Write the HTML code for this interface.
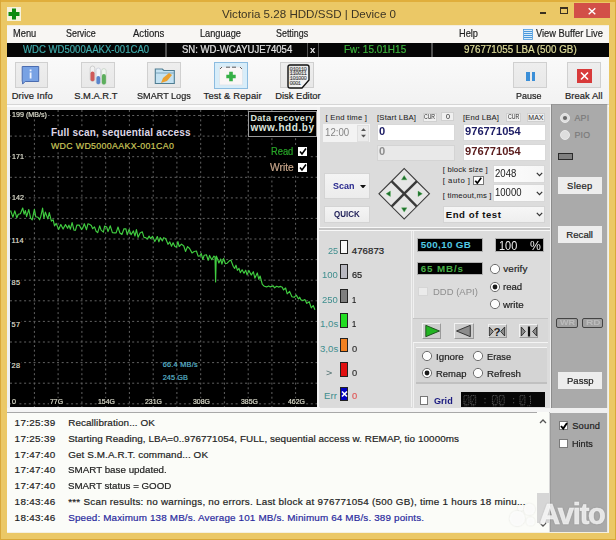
<!DOCTYPE html><html><head><meta charset="utf-8"><style>
html,body{margin:0;padding:0;width:616px;height:540px;overflow:hidden;background:#ebc866;}
body{position:relative;font-family:"Liberation Sans", sans-serif;}
div,span,svg{position:absolute;box-sizing:border-box;}
.t{white-space:nowrap;transform-origin:0 0;font-family:"Liberation Sans", sans-serif;}
</style></head><body>
<div style="left:0px;top:0px;width:616px;height:2px;background:#e0ae3c;"></div>
<div style="left:0px;top:0px;width:1px;height:540px;background:#d9a83a;"></div>
<div style="left:615px;top:0px;width:1px;height:540px;background:#d9a83a;"></div>
<div style="left:0px;top:539px;width:616px;height:1px;background:#d9a83a;"></div>
<div style="left:7px;top:25px;width:602px;height:1px;background:#f4eedc;"></div>
<svg style="left:7px;top:7px" width="14" height="14" viewBox="0 0 14 14"><rect x="0" y="0" width="14" height="14" fill="#f6f2dc"/><path d="M5 1.5h4v3.5h3.5v4H9v3.5H5V9H1.5V5H5z" fill="#108a10"/></svg>
<div style="left:540px;top:12px;width:6px;height:2px;background:#3a3020;"></div>
<div style="left:560px;top:7px;width:8px;height:7px;border:1.5px solid #3a3020;border-top-width:2.5px;"></div>
<div style="left:574px;top:3px;width:36px;height:15px;background:#d24f48;"></div>
<svg style="left:586px;top:5px" width="12" height="11" viewBox="0 0 12 11"><path d="M2.7 3.2L9.3 9.3M9.3 3.2L2.7 9.3" stroke="#fff" stroke-width="1.4"/></svg>
<div style="left:7px;top:26px;width:602px;height:507px;background:#f0f0f0;"></div>
<div style="left:7px;top:26px;width:602px;height:17px;background:#f8f6f3;"></div>
<svg style="left:523px;top:29px" width="10" height="11" viewBox="0 0 10 11"><rect x="0.5" y="0.5" width="9" height="10" fill="#d8ecfa" stroke="#4a98dc" stroke-width="0.8"/><path d="M1 2.5h8M1 4.5h8M1 6.5h8M1 8.5h8" stroke="#4a98dc" stroke-width="1"/></svg>
<div style="left:7px;top:43px;width:602px;height:14px;background:#060606;"></div>
<div style="left:165.0px;top:43px;width:1.5px;height:14px;background:#505050;"></div>
<div style="left:306.8px;top:43px;width:1.5px;height:14px;background:#505050;"></div>
<div style="left:317.8px;top:43px;width:1.5px;height:14px;background:#505050;"></div>
<div style="left:431.0px;top:43px;width:1.5px;height:14px;background:#505050;"></div>
<div style="left:7px;top:57px;width:602px;height:48px;background:linear-gradient(#fafafa,#f2f2f2);"></div>
<div style="left:7px;top:104px;width:602px;height:1px;background:#d6d6d6;"></div>
<div style="left:7px;top:105px;width:602px;height:2px;background:#fbfbfb;"></div>
<div style="left:14.5px;top:62.4px;width:33.3px;height:26.1px;background:linear-gradient(#eeeeee,#e8e8e8);border:1px solid #d0d0d0;"></div>
<div style="left:80.9px;top:62.4px;width:33.89999999999999px;height:26.1px;background:linear-gradient(#eeeeee,#e8e8e8);border:1px solid #d0d0d0;"></div>
<div style="left:147.2px;top:62.4px;width:33.60000000000002px;height:26.1px;background:linear-gradient(#eeeeee,#e8e8e8);border:1px solid #d0d0d0;"></div>
<div style="left:214.2px;top:62.3px;width:33.60000000000002px;height:26.299999999999997px;background:#d8edf9;border:1px solid #8cbce0;"></div>
<div style="left:280.2px;top:62.4px;width:33.400000000000034px;height:26.1px;background:linear-gradient(#eeeeee,#e8e8e8);border:1px solid #d0d0d0;"></div>
<div style="left:513.2px;top:62.4px;width:33.5px;height:26.1px;background:linear-gradient(#eeeeee,#e8e8e8);border:1px solid #d0d0d0;"></div>
<div style="left:566.9px;top:62.4px;width:33.89999999999998px;height:26.1px;background:linear-gradient(#eeeeee,#e8e8e8);border:1px solid #d0d0d0;"></div>
<svg style="left:21px;top:65px" width="20" height="21" viewBox="0 0 20 21"><path d="M1.2 1.5h16.5v15H4.2l-2.6 2.6V16.5H1.2z" fill="#78a2e4" stroke="#4a6cb0" stroke-width="1"/><rect x="8.7" y="4.5" width="1.8" height="1.8" fill="#eef4ff"/><rect x="8.7" y="7.5" width="1.8" height="6" fill="#eef4ff"/></svg>
<svg style="left:88px;top:64px" width="20" height="22" viewBox="0 0 20 22"><rect x="2.2" y="2" width="4.6" height="15.5" rx="2.3" fill="#f2f2f2" stroke="#b8b8b8" stroke-width="0.6"/><rect x="2.5" y="7.5" width="4" height="9.8" rx="2" fill="#cf5a5a"/><rect x="8.1" y="4" width="4.4" height="16.4" rx="2.2" fill="#f4f6fa" stroke="#c0c4d0" stroke-width="0.6"/><rect x="8.4" y="12" width="3.8" height="8.2" rx="1.9" fill="#5a86cc"/><rect x="13.6" y="4.6" width="4.6" height="16" rx="2.3" fill="#f0f6f0" stroke="#b8c8b8" stroke-width="0.6"/><rect x="13.9" y="10" width="4" height="10.4" rx="2" fill="#5cae5c"/></svg>
<svg style="left:154px;top:67px" width="22" height="18" viewBox="0 0 22 18"><path d="M1.3 2h7l1.5 1.5h10.5v13H1.3z" fill="#c4e2f2" stroke="#4f7d92" stroke-width="1.1"/><path d="M1.8 6h18" stroke="#6a98b0" stroke-width="0.8"/><path d="M7 16l2-5 6-5 3 2-5 6z" fill="#eaa030"/></svg>
<svg style="left:218px;top:65px" width="26" height="22" viewBox="0 0 26 22"><rect x="1.5" y="2" width="23" height="18" fill="#faf6f6" stroke="#dde4ea" stroke-width="0.8"/><path d="M2 4l2-2M24 4l-2-2M8 2.2h4M14 2.2h4" stroke="#333" stroke-width="0.8"/><path d="M11.2 6.8h3.6v2.9h2.9v3.6h-2.9v2.9h-3.6v-2.9H8.3V9.7h2.9z" fill="#36b046"/></svg>
<svg style="left:287px;top:63.5px" width="24" height="25" viewBox="0 0 24 25"><defs><linearGradient id="dg" x1="0" y1="0" x2="1" y2="1"><stop offset="0" stop-color="#dcdcdc"/><stop offset="1" stop-color="#fcfcfc"/></linearGradient></defs><path d="M3 1h17q2 0 2 2v13l-7 8H3q-2 0-2-2V3q0-2 2-2z" fill="url(#dg)" stroke="#111" stroke-width="1.4"/>
<g font-family="Liberation Mono" font-size="5.8" fill="#2a2a2a"><text x="2.6" y="6.8" textLength="17.5">010110</text><text x="2.6" y="11.4" textLength="17.5">110011</text><text x="2.6" y="16.3" textLength="17.5">101000</text><text x="2.6" y="21.2" textLength="11.5">0001</text></g></svg>
<div style="left:526.4px;top:72px;width:3.2000000000000455px;height:8.5px;background:#3b8fd8;"></div>
<div style="left:532.2px;top:72px;width:3.199999999999932px;height:8.5px;background:#3b8fd8;"></div>
<svg style="left:577px;top:69px" width="15" height="14" viewBox="0 0 15 14"><rect width="15" height="14" fill="#d83a3a"/><path d="M4 3.5l7 7M11 3.5l-7 7" stroke="#fff" stroke-width="1.6"/></svg>
<div style="left:10px;top:110px;width:307px;height:297.3px;background:#000;"></div>
<svg style="left:0px;top:0px" width="616" height="540">
<line x1="34.4" y1="110" x2="34.4" y2="407" stroke="#626262" stroke-width="1" stroke-dasharray="2 2.7"/>
<line x1="58.1" y1="110" x2="58.1" y2="407" stroke="#626262" stroke-width="1" stroke-dasharray="2 2.7"/>
<line x1="81.9" y1="110" x2="81.9" y2="407" stroke="#626262" stroke-width="1" stroke-dasharray="2 2.7"/>
<line x1="105.7" y1="110" x2="105.7" y2="407" stroke="#626262" stroke-width="1" stroke-dasharray="2 2.7"/>
<line x1="129.4" y1="110" x2="129.4" y2="407" stroke="#626262" stroke-width="1" stroke-dasharray="2 2.7"/>
<line x1="153.2" y1="110" x2="153.2" y2="407" stroke="#626262" stroke-width="1" stroke-dasharray="2 2.7"/>
<line x1="176.9" y1="110" x2="176.9" y2="407" stroke="#626262" stroke-width="1" stroke-dasharray="2 2.7"/>
<line x1="200.7" y1="110" x2="200.7" y2="407" stroke="#626262" stroke-width="1" stroke-dasharray="2 2.7"/>
<line x1="224.4" y1="110" x2="224.4" y2="407" stroke="#626262" stroke-width="1" stroke-dasharray="2 2.7"/>
<line x1="248.2" y1="110" x2="248.2" y2="407" stroke="#626262" stroke-width="1" stroke-dasharray="2 2.7"/>
<line x1="271.9" y1="110" x2="271.9" y2="407" stroke="#626262" stroke-width="1" stroke-dasharray="2 2.7"/>
<line x1="295.6" y1="110" x2="295.6" y2="407" stroke="#626262" stroke-width="1" stroke-dasharray="2 2.7"/>
<line x1="10" y1="115.5" x2="317" y2="115.5" stroke="#626262" stroke-width="1" stroke-dasharray="2 2.7"/>
<line x1="10" y1="136.1" x2="317" y2="136.1" stroke="#626262" stroke-width="1" stroke-dasharray="2 2.7"/>
<line x1="10" y1="156.7" x2="317" y2="156.7" stroke="#626262" stroke-width="1" stroke-dasharray="2 2.7"/>
<line x1="10" y1="177.3" x2="317" y2="177.3" stroke="#626262" stroke-width="1" stroke-dasharray="2 2.7"/>
<line x1="10" y1="197.9" x2="317" y2="197.9" stroke="#626262" stroke-width="1" stroke-dasharray="2 2.7"/>
<line x1="10" y1="218.4" x2="317" y2="218.4" stroke="#626262" stroke-width="1" stroke-dasharray="2 2.7"/>
<line x1="10" y1="239.0" x2="317" y2="239.0" stroke="#626262" stroke-width="1" stroke-dasharray="2 2.7"/>
<line x1="10" y1="259.6" x2="317" y2="259.6" stroke="#626262" stroke-width="1" stroke-dasharray="2 2.7"/>
<line x1="10" y1="280.2" x2="317" y2="280.2" stroke="#626262" stroke-width="1" stroke-dasharray="2 2.7"/>
<line x1="10" y1="300.8" x2="317" y2="300.8" stroke="#626262" stroke-width="1" stroke-dasharray="2 2.7"/>
<line x1="10" y1="321.4" x2="317" y2="321.4" stroke="#626262" stroke-width="1" stroke-dasharray="2 2.7"/>
<line x1="10" y1="342.0" x2="317" y2="342.0" stroke="#626262" stroke-width="1" stroke-dasharray="2 2.7"/>
<line x1="10" y1="362.6" x2="317" y2="362.6" stroke="#626262" stroke-width="1" stroke-dasharray="2 2.7"/>
<line x1="10" y1="383.2" x2="317" y2="383.2" stroke="#626262" stroke-width="1" stroke-dasharray="2 2.7"/>
<line x1="10" y1="403.8" x2="317" y2="403.8" stroke="#626262" stroke-width="1" stroke-dasharray="2 2.7"/>
<polyline points="10.6,210.5 12.9,217.1 14.8,210.8 16.8,217.8 18.3,214.3 20.4,213.7 22.7,208.0 24.1,214.2 25.4,210.5 26.6,216.6 28.8,209.5 30.6,218.1 32.2,219.9 34.4,209.3 35.8,216.8 38.0,217.3 39.6,219.8 40.8,216.4 42.6,208.1 43.9,218.3 45.4,212.1 47.8,218.9 49.3,212.6 51.4,221.1 53.2,219.8 54.5,225.9 56.2,223.4 58.6,229.5 60.8,224.5 63.1,229.1 65.5,224.6 67.6,228.3 68.9,225.1 70.4,229.2 72.1,222.6 74.0,230.1 75.4,230.3 76.9,225.0 79.2,225.1 81.5,229.6 82.8,227.9 84.3,223.7 86.5,229.7 87.9,223.8 89.4,224.3 91.3,225.5 92.7,228.7 94.5,226.9 96.1,231.2 97.7,232.6 99.7,225.9 101.1,230.1 103.4,232.1 104.6,226.1 106.7,227.0 108.0,231.6 110.3,225.8 112.4,232.7 114.4,232.9 116.1,232.9 118.0,227.0 119.9,233.0 121.9,234.5 124.0,228.7 125.9,228.9 127.2,234.7 129.1,229.4 131.1,234.7 133.4,230.9 135.0,236.0 136.4,229.6 138.1,237.3 140.1,233.0 142.3,231.8 144.0,237.4 145.3,237.6 147.5,238.9 149.1,236.1 150.6,238.6 152.5,236.3 154.8,241.6 156.0,239.3 157.3,236.5 158.9,241.8 160.2,237.6 162.4,240.9 163.7,237.7 165.6,238.5 168.0,244.3 169.8,241.9 171.5,246.2 173.1,242.7 174.9,246.5 176.5,247.1 177.9,241.6 179.2,246.5 181.5,244.1 183.8,246.0 185.5,251.4 187.6,246.6 189.6,248.5 192.0,252.9 194.2,251.5 196.4,251.0 198.1,256.1 199.9,256.0 201.2,253.4 202.8,259.5 204.2,255.2 206.4,254.8 208.2,260.3 209.6,255.4 211.7,259.7 213.9,256.1 215.0,257.0 215.6,282.0 216.3,256.0 217.0,257.5 218.9,263.0 220.7,259.1 221.9,264.1 223.6,258.5 225.4,263.7 227.2,263.2 229.6,260.6 230.9,260.3 233.2,266.3 234.6,268.4 236.0,265.2 237.4,270.3 239.0,268.3 240.3,272.7 242.1,269.7 244.0,273.2 245.7,270.2 247.1,274.9 248.9,270.5 251.2,275.1 253.3,271.7 254.9,278.1 257.3,272.9 258.8,279.3 260.1,276.0 262.3,284.4 264.3,286.2 266.6,286.9 268.7,285.9 270.0,286.9 271.8,286.4 273.2,285.8 274.6,287.8 276.7,286.3 278.4,287.1 280.6,286.4 282.3,287.3 283.5,289.9 285.6,288.0 287.2,293.8 289.6,291.4 291.9,296.8 294.1,297.3 296.3,295.1 298.5,299.0 299.7,297.2 301.0,299.9 302.9,300.5 304.9,299.5 306.8,303.4 309.2,301.7 311.3,307.9 313.2,305.5 314.9,309.8" fill="none" stroke="#40cc40" stroke-width="1.15" stroke-linejoin="round"/>
</svg>
<div style="left:248px;top:111px;width:69px;height:25.5px;background:#000;border:1px solid #9a9a9a;"></div>
<div style="left:49px;top:127px;width:144px;height:24px;background:#000;"></div>
<div style="left:268px;top:145px;width:42px;height:30px;background:#000;"></div>
<div style="left:297.8px;top:147.2px;width:9.599999999999966px;height:9.0px;background:#fff;"></div>
<svg style="left:298px;top:147.2px" width="10" height="9" viewBox="0 0 10 9"><path d="M2 4.5l2 2.5 4-5.5" stroke="#000" stroke-width="1.6" fill="none"/></svg>
<div style="left:297.8px;top:163px;width:9.599999999999966px;height:9px;background:#fff;"></div>
<svg style="left:298px;top:163px" width="10" height="9" viewBox="0 0 10 9"><path d="M2 4.5l2 2.5 4-5.5" stroke="#000" stroke-width="1.6" fill="none"/></svg>
<div style="left:10.5px;top:109.8px;width:37.099999999999994px;height:9.0px;background:#000;"></div>
<div style="left:10.5px;top:152.2px;width:14.2px;height:9.0px;background:#000;"></div>
<div style="left:10.5px;top:193.2px;width:14.2px;height:9.0px;background:#000;"></div>
<div style="left:10.5px;top:235.8px;width:14.2px;height:9.0px;background:#000;"></div>
<div style="left:10.5px;top:277.7px;width:10.7px;height:9.0px;background:#000;"></div>
<div style="left:10.5px;top:319.7px;width:10.7px;height:9.0px;background:#000;"></div>
<div style="left:10.5px;top:361.0px;width:10.7px;height:9.0px;background:#000;"></div>
<div style="left:10.5px;top:397.6px;width:6.199999999999999px;height:9.0px;background:#000;"></div>
<div style="left:49.3px;top:398px;width:15.0px;height:8px;background:#000;"></div>
<div style="left:97.0px;top:398px;width:19.0px;height:8px;background:#000;"></div>
<div style="left:143.9px;top:398px;width:19.0px;height:8px;background:#000;"></div>
<div style="left:191.8px;top:398px;width:19.0px;height:8px;background:#000;"></div>
<div style="left:239.5px;top:398px;width:19.0px;height:8px;background:#000;"></div>
<div style="left:287.0px;top:398px;width:19.0px;height:8px;background:#000;"></div>
<div style="left:317px;top:107px;width:2.5px;height:304px;background:#f2f2f2;"></div>
<div style="left:319.5px;top:107px;width:230.5px;height:304px;background:#dcdcdc;"></div>
<div style="left:323.3px;top:123.8px;width:47.099999999999966px;height:18.39999999999999px;background:#f3f3f3;"></div>
<div style="left:357px;top:124.5px;width:12px;height:17.0px;background:#ececec;border:1px solid #e0e0e0;"></div>
<svg style="left:359px;top:126px" width="9" height="14" viewBox="0 0 9 14"><path d="M2 5l2.5-2.8 2.5 2.8z" fill="#555"/><path d="M2 8.8l2.5 2.8 2.5-2.8z" fill="#555"/></svg>
<div style="left:422.6px;top:112.8px;width:14.299999999999955px;height:9.200000000000003px;background:#f0f0f0;border:1px solid #d0d0d0;"></div>
<div style="left:440.7px;top:112.4px;width:13.699999999999989px;height:8.599999999999994px;background:#f0f0f0;border:1px solid #d0d0d0;"></div>
<div style="left:506px;top:112.8px;width:14.600000000000023px;height:9.200000000000003px;background:#f0f0f0;border:1px solid #d0d0d0;"></div>
<div style="left:526.5px;top:112.8px;width:18.5px;height:9.200000000000003px;background:#f0f0f0;border:1px solid #d0d0d0;"></div>
<div style="left:377px;top:124px;width:78.30000000000001px;height:16.5px;background:#fff;border:1px solid #d8d8d8;"></div>
<div style="left:377px;top:144.5px;width:78.30000000000001px;height:16.0px;background:#e9e9e9;border:1px solid #d4d4d4;"></div>
<div style="left:463px;top:123.5px;width:83px;height:17.0px;background:#fff;border:1px solid #d8d8d8;"></div>
<div style="left:463px;top:144px;width:83px;height:16.5px;background:#fff;border:1px solid #d8d8d8;"></div>
<div style="left:324.4px;top:172.7px;width:46.0px;height:26.30000000000001px;background:linear-gradient(#f4f4f4,#ececec);border:1px solid #d4d4d4;"></div>
<svg style="left:359.5px;top:184.5px" width="6" height="3.5" viewBox="0 0 6 3.5"><path d="M0 0h6L3 3.5z" fill="#111"/></svg>
<div style="left:324.4px;top:206.4px;width:46.0px;height:17.099999999999994px;background:linear-gradient(#f4f4f4,#ececec);border:1px solid #d4d4d4;"></div>
<svg style="left:377px;top:167px" width="55" height="54" viewBox="0 0 55 54">
<g transform="translate(27.2,26.8) rotate(45)">
<rect x="-18.4" y="-18.4" width="36.8" height="36.8" fill="#3a3a3a"/>
<rect x="-17.3" y="-17.3" width="16.1" height="16.1" fill="#e6e6e6"/>
<rect x="1.2" y="-17.3" width="16.1" height="16.1" fill="#e6e6e6"/>
<rect x="-17.3" y="1.2" width="16.1" height="16.1" fill="#e6e6e6"/>
<rect x="1.2" y="1.2" width="16.1" height="16.1" fill="#e6e6e6"/>
</g>
<path d="M24.5 12.8l2.7-4.3 2.7 4.3z" fill="#1e6e2e" stroke="#50b050" stroke-width="0.4"/>
<path d="M24.5 40.8l2.7 4.3 2.7-4.3z" fill="#1e6e2e" stroke="#50b050" stroke-width="0.4"/>
<path d="M13.4 24.1l-4.3 2.7 4.3 2.7z" fill="#1e6e2e" stroke="#50b050" stroke-width="0.4"/>
<path d="M41 24.1l4.3 2.7-4.3 2.7z" fill="#1e6e2e" stroke="#50b050" stroke-width="0.4"/>
</svg>
<div style="left:473.3px;top:176.2px;width:10.300000000000011px;height:9.200000000000017px;background:#fff;border:1px solid #777;"></div>
<svg style="left:473.3px;top:176.2px" width="10.3" height="9.2" viewBox="0 0 10 9"><path d="M2.2 4.6l2 2.4 3.8-5.2" stroke="#000" stroke-width="1.7" fill="none"/></svg>
<div style="left:492.7px;top:165.4px;width:52.69999999999999px;height:17.5px;background:linear-gradient(90deg,#fdfdfd,#f6f6f6);border:1px solid #d8d8d8;"></div>
<svg style="left:536.4px;top:171.8px" width="7" height="5" viewBox="0 0 7 5"><path d="M0.8 0.8l2.7 2.9 2.7-2.9" stroke="#333" stroke-width="1.2" fill="none"/></svg>
<div style="left:492.7px;top:184.1px;width:52.69999999999999px;height:18.099999999999994px;background:linear-gradient(90deg,#fdfdfd,#f6f6f6);border:1px solid #d8d8d8;"></div>
<svg style="left:536.4px;top:190.7px" width="7" height="5" viewBox="0 0 7 5"><path d="M0.8 0.8l2.7 2.9 2.7-2.9" stroke="#333" stroke-width="1.2" fill="none"/></svg>
<div style="left:442.8px;top:205.5px;width:102.59999999999997px;height:17.80000000000001px;background:linear-gradient(#f6f6f6,#eeeeee);border:1px solid #d4d4d4;"></div>
<svg style="left:536.4px;top:212.3px" width="7" height="5" viewBox="0 0 7 5"><path d="M0.8 0.8l2.7 2.9 2.7-2.9" stroke="#333" stroke-width="1.2" fill="none"/></svg>
<div style="left:319px;top:226.5px;width:231px;height:1.0px;background:#f8f8f8;"></div>
<div style="left:319px;top:227.5px;width:231px;height:2.5px;background:#c4c4c4;"></div>
<div style="left:319px;top:230px;width:231px;height:1px;background:#f8f8f8;"></div>
<div style="left:318.5px;top:231px;width:93.5px;height:176px;background:#dbdbdb;border-right:1px solid #f0f0f0;"></div>
<div style="left:340.2px;top:239.9px;width:8.199999999999989px;height:14.5px;background:#f8f8f8;border:1.3px solid #222;"></div>
<div style="left:340.2px;top:264.34000000000003px;width:8.199999999999989px;height:14.5px;background:#b8b8c0;border:1.3px solid #222;"></div>
<div style="left:340.2px;top:288.78000000000003px;width:8.199999999999989px;height:14.5px;background:#7e7e7e;border:1.3px solid #222;"></div>
<div style="left:340.2px;top:313.22px;width:8.199999999999989px;height:14.5px;background:#22dd22;border:1.3px solid #222;"></div>
<div style="left:340.2px;top:337.66px;width:8.199999999999989px;height:14.5px;background:#f08020;border:1.3px solid #222;"></div>
<div style="left:340.2px;top:362.1px;width:8.199999999999989px;height:14.5px;background:#e01010;border:1.3px solid #222;"></div>
<div style="left:340.2px;top:386.54px;width:8.199999999999989px;height:14.5px;background:#0000c0;border:1.3px solid #222;"></div>
<svg style="left:341px;top:388.5px" width="7" height="10" viewBox="0 0 7 10"><path d="M1 2.5l5 5M6 2.5l-5 5" stroke="#fff" stroke-width="1.6"/></svg>
<div style="left:413px;top:231px;width:137px;height:180px;background:#dcdcdc;border-left:1px solid #f0f0f0;"></div>
<div style="left:417.1px;top:238.3px;width:66.0px;height:14.199999999999989px;background:#000;border:1px solid #b0b0b0;"></div>
<div style="left:494.7px;top:238.1px;width:49.099999999999966px;height:14.099999999999994px;background:#000;border:1px solid #b0b0b0;"></div>
<div style="left:417.1px;top:261.8px;width:66.0px;height:13.599999999999966px;background:#000;border:1px solid #b0b0b0;"></div>
<svg style="left:488.5px;top:262.7px" width="12" height="12" viewBox="0 0 12 12"><circle cx="6" cy="6" r="4.6" fill="#fdfdfd" stroke="#6e6e6e" stroke-width="1"/></svg>
<svg style="left:488.5px;top:281.0px" width="12" height="12" viewBox="0 0 12 12"><circle cx="6" cy="6" r="4.6" fill="#fdfdfd" stroke="#6e6e6e" stroke-width="1"/><circle cx="6" cy="6" r="2.4" fill="#1a1a1a"/></svg>
<svg style="left:488.5px;top:298.3px" width="12" height="12" viewBox="0 0 12 12"><circle cx="6" cy="6" r="4.6" fill="#fdfdfd" stroke="#6e6e6e" stroke-width="1"/></svg>
<div style="left:418.3px;top:286.7px;width:9.699999999999989px;height:9.100000000000023px;background:#ebebeb;border:1px solid #d6d6d6;"></div>
<div style="left:413px;top:318px;width:135px;height:25px;background:#d8d8d8;border-top:1px solid #c4c4c4;border-bottom:1px solid #f4f4f4;"></div>
<div style="left:422.2px;top:323px;width:18.80000000000001px;height:15.600000000000023px;background:#cdcdcd;border:1px solid #f2f2f2;border-right-color:#9a9a9a;border-bottom-color:#9a9a9a;"></div>
<svg style="left:424px;top:324px" width="17" height="14" viewBox="0 0 17 14"><path d="M1.8 1.3L15.5 7 1.8 12.7z" fill="#22b422" stroke="#1a4a1a" stroke-width="0.9"/></svg>
<div style="left:454px;top:323px;width:19.5px;height:15.600000000000023px;background:#cdcdcd;border:1px solid #f2f2f2;border-right-color:#9a9a9a;border-bottom-color:#9a9a9a;"></div>
<svg style="left:455px;top:324px" width="17" height="14" viewBox="0 0 17 14"><path d="M15.3 1.3L1.5 7l13.8 5.7z" fill="#8c8c8c" stroke="#2a2a2a" stroke-width="0.9"/></svg>
<div style="left:487.6px;top:323.9px;width:19.0px;height:14.600000000000023px;background:#cdcdcd;border:1px solid #f2f2f2;border-right-color:#9a9a9a;border-bottom-color:#9a9a9a;"></div>
<svg style="left:488px;top:325px" width="18" height="13" viewBox="0 0 18 13"><path d="M1.3 2l4 4.5-4 4.5z" fill="#8c8c8c" stroke="#2a2a2a" stroke-width="0.9"/><path d="M16.7 2l-4 4.5 4 4.5z" fill="#8c8c8c" stroke="#2a2a2a" stroke-width="0.9"/><text x="5.6" y="11.2" font-family="Liberation Sans" font-weight="bold" font-size="11.5" fill="#1a1a1a">?</text></svg>
<div style="left:519.4px;top:323.9px;width:19.0px;height:14.600000000000023px;background:#cdcdcd;border:1px solid #f2f2f2;border-right-color:#9a9a9a;border-bottom-color:#9a9a9a;"></div>
<svg style="left:520px;top:325px" width="18" height="13" viewBox="0 0 18 13"><path d="M1.3 2l4 4.5-4 4.5z" fill="#8c8c8c" stroke="#2a2a2a" stroke-width="0.9"/><path d="M16.7 2l-4 4.5 4 4.5z" fill="#8c8c8c" stroke="#2a2a2a" stroke-width="0.9"/><rect x="7.9" y="1.5" width="2.2" height="10" fill="#111"/></svg>
<div style="left:415.7px;top:346.5px;width:131.50000000000006px;height:37.5px;background:#d4d4d4;border-top:1px solid #f4f4f4;border-bottom:2px solid #c0c0c0;"></div>
<svg style="left:420.6px;top:350.1px" width="12" height="12" viewBox="0 0 12 12"><circle cx="6" cy="6" r="4.6" fill="#fdfdfd" stroke="#6e6e6e" stroke-width="1"/></svg>
<svg style="left:471.5px;top:350.1px" width="12" height="12" viewBox="0 0 12 12"><circle cx="6" cy="6" r="4.6" fill="#fdfdfd" stroke="#6e6e6e" stroke-width="1"/></svg>
<svg style="left:420.6px;top:367.2px" width="12" height="12" viewBox="0 0 12 12"><circle cx="6" cy="6" r="4.6" fill="#fdfdfd" stroke="#6e6e6e" stroke-width="1"/><circle cx="6" cy="6" r="2.4" fill="#1a1a1a"/></svg>
<svg style="left:471.5px;top:367.2px" width="12" height="12" viewBox="0 0 12 12"><circle cx="6" cy="6" r="4.6" fill="#fdfdfd" stroke="#6e6e6e" stroke-width="1"/></svg>
<div style="left:419.5px;top:395.5px;width:8.899999999999977px;height:9.300000000000011px;background:#fff;border:1px solid #777;"></div>
<div style="left:461.3px;top:391.7px;width:83.99999999999994px;height:15.699999999999989px;background:#060606;"></div>
<svg style="left:0px;top:0px" width="616" height="540"><g fill="none" stroke="#5a5a5a" stroke-width="0.9" stroke-dasharray="1.2 0.6"><path d="M464.4 395.6h4.2l0.3 0.4v8.1l-0.3 0.3h-4.2l-0.4-0.3v-8.1z"/><path d="M464.7 403.5l3.5-7" stroke-width="0.6"/><path d="M464.4 405.8h4" stroke-width="0.7"/><path d="M471.2 395.6h4.2l0.3 0.4v8.1l-0.3 0.3h-4.2l-0.4-0.3v-8.1z"/><path d="M471.5 403.5l3.5-7" stroke-width="0.6"/><path d="M471.2 405.8h4" stroke-width="0.7"/><path d="M485.0 398.3v1M485.0 402.3v1" stroke-width="1.1" stroke-dasharray="none"/><path d="M492.8 395.6h4.2l0.3 0.4v8.1l-0.3 0.3h-4.2l-0.4-0.3v-8.1z"/><path d="M493.1 403.5l3.5-7" stroke-width="0.6"/><path d="M492.8 405.8h4" stroke-width="0.7"/><path d="M499.7 395.6h4.2l0.3 0.4v8.1l-0.3 0.3h-4.2l-0.4-0.3v-8.1z"/><path d="M500.0 403.5l3.5-7" stroke-width="0.6"/><path d="M499.7 405.8h4" stroke-width="0.7"/><path d="M513.6 398.3v1M513.6 402.3v1" stroke-width="1.1" stroke-dasharray="none"/><path d="M520.4 395.6h4.2l0.3 0.4v8.1l-0.3 0.3h-4.2l-0.4-0.3v-8.1z"/><path d="M520.7 403.5l3.5-7" stroke-width="0.6"/><path d="M520.4 405.8h4" stroke-width="0.7"/><path d="M530.5 395.6v8.7M529.2 396.8l1.3-1.2" /><path d="M527.2 405.8h4" stroke-width="0.7"/></g></svg>
<div style="left:551px;top:104px;width:57px;height:304px;background:#aaaaaa;border-left:1.5px solid #8c8c8c;border-top:1px solid #999;border-right:1px solid #e8e8e0;"></div>
<svg style="left:559.0px;top:111.7px" width="12" height="12" viewBox="0 0 12 12"><circle cx="6" cy="6" r="4.5" fill="#dedede" stroke="#ececec" stroke-width="0.9"/><circle cx="6" cy="6" r="2.1" fill="#6a6a6a"/></svg>
<svg style="left:559.0px;top:129.2px" width="12" height="12" viewBox="0 0 12 12"><circle cx="6" cy="6" r="4.5" fill="#dedede" stroke="#ececec" stroke-width="0.9"/></svg>
<div style="left:558.1px;top:152.8px;width:15.0px;height:7.399999999999977px;background:#808080;border:1.2px solid #2a2a2a;"></div>
<div style="left:558.2px;top:177.1px;width:43.69999999999993px;height:16.599999999999994px;background:#ededed;"></div>
<div style="left:558.2px;top:226.3px;width:43.69999999999993px;height:17.0px;background:#ededed;"></div>
<div style="left:556.3px;top:317.6px;width:21.300000000000068px;height:10.0px;background:#a0a0a0;border:1.5px solid #444;border-radius:2px;"></div>
<div style="left:582px;top:317.6px;width:21.100000000000023px;height:10.0px;background:#a0a0a0;border:1.5px solid #444;border-radius:2px;"></div>
<div style="left:557.8px;top:372px;width:44.40000000000009px;height:17.30000000000001px;background:#ededed;"></div>
<div style="left:7px;top:407.5px;width:543px;height:4.5px;background:#f4f4f4;"></div>
<div style="left:7px;top:412px;width:543px;height:121px;background:#fbfcf8;border-top:1px solid #a8a8a8;border-right:1px solid #d8d8d8;"></div>
<div style="left:537.3px;top:412px;width:12.0px;height:120px;background:#fbfcf8;"></div>
<div style="left:537.3px;top:492.8px;width:11.700000000000045px;height:29.80000000000001px;background:#d6d6d6;"></div>
<svg style="left:539px;top:418px" width="8" height="6" viewBox="0 0 8 6"><path d="M1 5l3-3 3 3" stroke="#555" stroke-width="1.3" fill="none"/></svg>
<svg style="left:539px;top:522px" width="8" height="6" viewBox="0 0 8 6"><path d="M1 1l3 3 3-3" stroke="#555" stroke-width="1.3" fill="none"/></svg>
<div style="left:550px;top:412.6px;width:58px;height:120.10000000000002px;background:#aaaaaa;border-left:1px solid #9c9c9c;border-right:1px solid #e8e8e0;"></div>
<div style="left:558.5px;top:420.8px;width:9.5px;height:9.699999999999989px;background:#fff;border:1px solid #7a7a7a;"></div>
<svg style="left:558.5px;top:420.8px" width="10" height="10" viewBox="0 0 10 10"><path d="M2 5l2.2 2.6 3.8-5.6" stroke="#000" stroke-width="1.9" fill="none"/></svg>
<div style="left:558.5px;top:438.9px;width:9.5px;height:9.600000000000023px;background:#fff;border:1px solid #7a7a7a;"></div>
<div style="left:7px;top:532px;width:602px;height:1px;background:#f4f0e0;"></div>
<svg style="left:500px;top:495px" width="116" height="42" viewBox="500 495 116 42">
<defs><filter id="sh" x="-20%" y="-20%" width="140%" height="140%"><feGaussianBlur in="SourceAlpha" stdDeviation="0.8"/><feOffset dx="0" dy="0.4"/><feComponentTransfer><feFuncA type="linear" slope="0.18"/></feComponentTransfer><feMerge><feMergeNode/><feMergeNode in="SourceGraphic"/></feMerge></filter></defs>
<g filter="url(#sh)" fill="#ffffff" fill-opacity="0.72">
<circle cx="517.3" cy="518.4" r="7.5"/>
<circle cx="529.4" cy="509.3" r="5.5"/>
<circle cx="530.6" cy="521.4" r="3.9"/>
<circle cx="520.6" cy="507.7" r="2.6"/>
<text x="539.2" y="523.6" font-family="Liberation Sans" font-weight="bold" font-size="29" letter-spacing="-1.2" stroke="#fff" stroke-opacity="0.6" stroke-width="0.6">Avito</text>
</g></svg>
<span class="t" id="t0" style="left:222px;top:7.60px;font-size:11.6px;line-height:11.6px;color:#3c3424;font-weight:normal;font-family:'Liberation Sans', sans-serif;transform:scaleX(0.9988);letter-spacing:0.000px;">Victoria 5.28 HDD/SSD | Device 0</span>
<span class="t" id="t1" style="left:12.5px;top:27.50px;font-size:10.6px;line-height:10.6px;color:#1e1e1e;font-weight:normal;font-family:'Liberation Sans', sans-serif;transform:scaleX(0.8755);letter-spacing:0.000px;-webkit-text-stroke:0.2px currentColor;">Menu</span>
<span class="t" id="t2" style="left:66px;top:27.50px;font-size:10.6px;line-height:10.6px;color:#1e1e1e;font-weight:normal;font-family:'Liberation Sans', sans-serif;transform:scaleX(0.8407);letter-spacing:0.000px;-webkit-text-stroke:0.2px currentColor;">Service</span>
<span class="t" id="t3" style="left:133px;top:27.50px;font-size:10.6px;line-height:10.6px;color:#1e1e1e;font-weight:normal;font-family:'Liberation Sans', sans-serif;transform:scaleX(0.9007);letter-spacing:0.000px;-webkit-text-stroke:0.2px currentColor;">Actions</span>
<span class="t" id="t4" style="left:200px;top:27.50px;font-size:10.6px;line-height:10.6px;color:#1e1e1e;font-weight:normal;font-family:'Liberation Sans', sans-serif;transform:scaleX(0.8697);letter-spacing:0.000px;-webkit-text-stroke:0.2px currentColor;">Language</span>
<span class="t" id="t5" style="left:276px;top:27.50px;font-size:10.6px;line-height:10.6px;color:#1e1e1e;font-weight:normal;font-family:'Liberation Sans', sans-serif;transform:scaleX(0.8411);letter-spacing:0.000px;-webkit-text-stroke:0.2px currentColor;">Settings</span>
<span class="t" id="t6" style="left:459px;top:27.50px;font-size:10.6px;line-height:10.6px;color:#1e1e1e;font-weight:normal;font-family:'Liberation Sans', sans-serif;transform:scaleX(0.8717);letter-spacing:0.000px;-webkit-text-stroke:0.2px currentColor;">Help</span>
<span class="t" id="t7" style="left:536.2px;top:27.50px;font-size:10.6px;line-height:10.6px;color:#1e1e1e;font-weight:normal;font-family:'Liberation Sans', sans-serif;transform:scaleX(0.8783);letter-spacing:0.000px;-webkit-text-stroke:0.2px currentColor;">View Buffer Live</span>
<span class="t" id="t8" style="left:23.2px;top:44.50px;font-size:10.2px;line-height:10.2px;color:#3eaaaa;font-weight:normal;font-family:'Liberation Sans', sans-serif;transform:scaleX(0.9397);letter-spacing:0.000px;-webkit-text-stroke:0.2px currentColor;">WDC WD5000AAKX-001CA0</span>
<span class="t" id="t9" style="left:181.5px;top:44.50px;font-size:10.2px;line-height:10.2px;color:#e0e0e0;font-weight:normal;font-family:'Liberation Sans', sans-serif;transform:scaleX(0.9374);letter-spacing:0.000px;-webkit-text-stroke:0.2px currentColor;">SN: WD-WCAYUJE74054</span>
<span class="t" id="t10" style="left:309.8px;top:45.05px;font-size:9.5px;line-height:9.5px;color:#e8e8e8;font-weight:bold;font-family:'Liberation Sans', sans-serif;transform:scaleX(1.0006);letter-spacing:0.000px;">x</span>
<span class="t" id="t11" style="left:343.9px;top:44.50px;font-size:10.2px;line-height:10.2px;color:#3cb43c;font-weight:normal;font-family:'Liberation Sans', sans-serif;transform:scaleX(0.9805);letter-spacing:0.000px;-webkit-text-stroke:0.2px currentColor;">Fw: 15.01H15</span>
<span class="t" id="t12" style="left:464px;top:44.50px;font-size:10.2px;line-height:10.2px;color:#dedc98;font-weight:normal;font-family:'Liberation Sans', sans-serif;transform:scaleX(0.9658);letter-spacing:0.000px;-webkit-text-stroke:0.2px currentColor;">976771055 LBA (500 GB)</span>
<span class="t" id="t13" style="left:11.7px;top:90.60px;font-size:9.4px;line-height:9.4px;color:#1e1e1e;font-weight:normal;font-family:'Liberation Sans', sans-serif;transform:scaleX(1.0000);letter-spacing:0.108px;-webkit-text-stroke:0.2px currentColor;">Drive Info</span>
<span class="t" id="t14" style="left:74.2px;top:90.60px;font-size:9.4px;line-height:9.4px;color:#1e1e1e;font-weight:normal;font-family:'Liberation Sans', sans-serif;transform:scaleX(1.0000);letter-spacing:0.008px;-webkit-text-stroke:0.2px currentColor;">S.M.A.R.T</span>
<span class="t" id="t15" style="left:136.5px;top:90.60px;font-size:9.4px;line-height:9.4px;color:#1e1e1e;font-weight:normal;font-family:'Liberation Sans', sans-serif;transform:scaleX(0.9707);letter-spacing:0.000px;-webkit-text-stroke:0.2px currentColor;">SMART Logs</span>
<span class="t" id="t16" style="left:203.6px;top:90.60px;font-size:9.4px;line-height:9.4px;color:#1e1e1e;font-weight:normal;font-family:'Liberation Sans', sans-serif;transform:scaleX(1.0000);letter-spacing:0.143px;-webkit-text-stroke:0.2px currentColor;">Test &amp; Repair</span>
<span class="t" id="t17" style="left:275.2px;top:90.60px;font-size:9.4px;line-height:9.4px;color:#1e1e1e;font-weight:normal;font-family:'Liberation Sans', sans-serif;transform:scaleX(1.0000);letter-spacing:0.017px;-webkit-text-stroke:0.2px currentColor;">Disk Editor</span>
<span class="t" id="t18" style="left:516px;top:90.60px;font-size:9.4px;line-height:9.4px;color:#1e1e1e;font-weight:normal;font-family:'Liberation Sans', sans-serif;transform:scaleX(0.9551);letter-spacing:0.000px;-webkit-text-stroke:0.2px currentColor;">Pause</span>
<span class="t" id="t19" style="left:565px;top:90.60px;font-size:9.4px;line-height:9.4px;color:#1e1e1e;font-weight:normal;font-family:'Liberation Sans', sans-serif;transform:scaleX(1.0000);letter-spacing:0.075px;-webkit-text-stroke:0.2px currentColor;">Break All</span>
<span class="t" id="t20" style="left:250.4px;top:113.80px;font-size:9px;line-height:9px;color:#dde4dc;font-weight:bold;font-family:'Liberation Sans', sans-serif;transform:scaleX(1.0000);letter-spacing:0.338px;">Data recovery</span>
<span class="t" id="t21" style="left:250.4px;top:122.60px;font-size:10px;line-height:10px;color:#dde4dc;font-weight:bold;font-family:'Liberation Sans', sans-serif;transform:scaleX(1.0000);letter-spacing:0.565px;">www.hdd.by</span>
<span class="t" id="t22" style="left:50.9px;top:128.10px;font-size:10px;line-height:10px;color:#ddd6e6;font-weight:bold;font-family:'Liberation Sans', sans-serif;transform:scaleX(1.0000);letter-spacing:0.192px;">Full scan, sequential access</span>
<span class="t" id="t23" style="left:50.9px;top:141.80px;font-size:8.8px;line-height:8.8px;color:#cac65a;font-weight:normal;font-family:'Liberation Sans', sans-serif;transform:scaleX(1.0000);letter-spacing:0.351px;-webkit-text-stroke:0.2px currentColor;">WDC WD5000AAKX-001CA0</span>
<span class="t" id="t24" style="left:271px;top:147.20px;font-size:10.4px;line-height:10.4px;color:#28a828;font-weight:normal;font-family:'Liberation Sans', sans-serif;transform:scaleX(0.8976);letter-spacing:0.000px;-webkit-text-stroke:0.2px currentColor;">Read</span>
<span class="t" id="t25" style="left:269.6px;top:163.00px;font-size:10.4px;line-height:10.4px;color:#c8a68a;font-weight:normal;font-family:'Liberation Sans', sans-serif;transform:scaleX(0.9849);letter-spacing:0.000px;-webkit-text-stroke:0.2px currentColor;">Write</span>
<span class="t" id="t26" style="left:11.6px;top:110.65px;font-size:7.3px;line-height:7.3px;color:#dcdccc;font-weight:normal;font-family:'Liberation Sans', sans-serif;transform:scaleX(0.9779);letter-spacing:0.000px;-webkit-text-stroke:0.2px currentColor;">199 (MB/s)</span>
<span class="t" id="t27" style="left:11.6px;top:153.05px;font-size:7.3px;line-height:7.3px;color:#dcdccc;font-weight:normal;font-family:'Liberation Sans', sans-serif;transform:scaleX(0.9846);letter-spacing:0.000px;-webkit-text-stroke:0.2px currentColor;">171</span>
<span class="t" id="t28" style="left:11.6px;top:194.05px;font-size:7.3px;line-height:7.3px;color:#dcdccc;font-weight:normal;font-family:'Liberation Sans', sans-serif;transform:scaleX(0.9846);letter-spacing:0.000px;-webkit-text-stroke:0.2px currentColor;">142</span>
<span class="t" id="t29" style="left:11.6px;top:236.65px;font-size:7.3px;line-height:7.3px;color:#dcdccc;font-weight:normal;font-family:'Liberation Sans', sans-serif;transform:scaleX(1.0000);letter-spacing:0.180px;-webkit-text-stroke:0.2px currentColor;">114</span>
<span class="t" id="t30" style="left:11.6px;top:278.55px;font-size:7.3px;line-height:7.3px;color:#dcdccc;font-weight:normal;font-family:'Liberation Sans', sans-serif;transform:scaleX(1.0000);letter-spacing:0.375px;-webkit-text-stroke:0.2px currentColor;">85</span>
<span class="t" id="t31" style="left:11.6px;top:320.55px;font-size:7.3px;line-height:7.3px;color:#dcdccc;font-weight:normal;font-family:'Liberation Sans', sans-serif;transform:scaleX(1.0000);letter-spacing:0.375px;-webkit-text-stroke:0.2px currentColor;">57</span>
<span class="t" id="t32" style="left:11.6px;top:361.85px;font-size:7.3px;line-height:7.3px;color:#dcdccc;font-weight:normal;font-family:'Liberation Sans', sans-serif;transform:scaleX(1.0000);letter-spacing:0.375px;-webkit-text-stroke:0.2px currentColor;">28</span>
<span class="t" id="t33" style="left:11.6px;top:398.45px;font-size:7.3px;line-height:7.3px;color:#dcdccc;font-weight:normal;font-family:'Liberation Sans', sans-serif;transform:scaleX(0.9846);letter-spacing:0.000px;-webkit-text-stroke:0.2px currentColor;">0</span>
<span class="t" id="t34" style="left:50.3px;top:398.45px;font-size:7.3px;line-height:7.3px;color:#dcdccc;font-weight:normal;font-family:'Liberation Sans', sans-serif;transform:scaleX(0.9422);letter-spacing:0.000px;-webkit-text-stroke:0.2px currentColor;">77G</span>
<span class="t" id="t35" style="left:98.0px;top:398.45px;font-size:7.3px;line-height:7.3px;color:#dcdccc;font-weight:normal;font-family:'Liberation Sans', sans-serif;transform:scaleX(0.9519);letter-spacing:0.000px;-webkit-text-stroke:0.2px currentColor;">154G</span>
<span class="t" id="t36" style="left:144.9px;top:398.45px;font-size:7.3px;line-height:7.3px;color:#dcdccc;font-weight:normal;font-family:'Liberation Sans', sans-serif;transform:scaleX(0.9519);letter-spacing:0.000px;-webkit-text-stroke:0.2px currentColor;">231G</span>
<span class="t" id="t37" style="left:192.8px;top:398.45px;font-size:7.3px;line-height:7.3px;color:#dcdccc;font-weight:normal;font-family:'Liberation Sans', sans-serif;transform:scaleX(0.9519);letter-spacing:0.000px;-webkit-text-stroke:0.2px currentColor;">308G</span>
<span class="t" id="t38" style="left:240.5px;top:398.45px;font-size:7.3px;line-height:7.3px;color:#dcdccc;font-weight:normal;font-family:'Liberation Sans', sans-serif;transform:scaleX(0.9519);letter-spacing:0.000px;-webkit-text-stroke:0.2px currentColor;">385G</span>
<span class="t" id="t39" style="left:288.0px;top:398.45px;font-size:7.3px;line-height:7.3px;color:#dcdccc;font-weight:normal;font-family:'Liberation Sans', sans-serif;transform:scaleX(0.9519);letter-spacing:0.000px;-webkit-text-stroke:0.2px currentColor;">462G</span>
<span class="t" id="t40" style="left:162.7px;top:361.05px;font-size:7.3px;line-height:7.3px;color:#58b4cc;font-weight:normal;font-family:'Liberation Sans', sans-serif;transform:scaleX(1.0000);letter-spacing:0.255px;-webkit-text-stroke:0.2px currentColor;">66.4 MB/s</span>
<span class="t" id="t41" style="left:162.7px;top:374.45px;font-size:7.3px;line-height:7.3px;color:#58b4cc;font-weight:normal;font-family:'Liberation Sans', sans-serif;transform:scaleX(1.0000);letter-spacing:0.090px;-webkit-text-stroke:0.2px currentColor;">245 GB</span>
<span class="t" id="t42" style="left:325.6px;top:113.75px;font-size:7.7px;line-height:7.7px;color:#222;font-weight:normal;font-family:'Liberation Sans', sans-serif;transform:scaleX(1.0000);letter-spacing:0.228px;-webkit-text-stroke:0.05px currentColor;">[ End time ]</span>
<span class="t" id="t43" style="left:325.3px;top:128.00px;font-size:10.2px;line-height:10.2px;color:#858585;font-weight:normal;font-family:'Liberation Sans', sans-serif;transform:scaleX(0.9490);letter-spacing:0.000px;">12:00</span>
<span class="t" id="t44" style="left:377px;top:113.55px;font-size:7.7px;line-height:7.7px;color:#222;font-weight:normal;font-family:'Liberation Sans', sans-serif;transform:scaleX(1.0000);letter-spacing:0.181px;-webkit-text-stroke:0.05px currentColor;">[Start LBA]</span>
<span class="t" id="t45" style="left:424.3px;top:114.25px;font-size:6.5px;line-height:6.5px;color:#333;font-weight:normal;font-family:'Liberation Sans', sans-serif;transform:scaleX(0.7805);letter-spacing:0.000px;-webkit-text-stroke:0.05px currentColor;">CUR</span>
<span class="t" id="t46" style="left:445.8px;top:113.60px;font-size:6.8px;line-height:6.8px;color:#333;font-weight:normal;font-family:'Liberation Sans', sans-serif;transform:scaleX(1.0579);letter-spacing:0.000px;-webkit-text-stroke:0.05px currentColor;">0</span>
<span class="t" id="t47" style="left:463px;top:113.55px;font-size:7.7px;line-height:7.7px;color:#222;font-weight:normal;font-family:'Liberation Sans', sans-serif;transform:scaleX(1.0000);letter-spacing:0.172px;-webkit-text-stroke:0.05px currentColor;">[End LBA]</span>
<span class="t" id="t48" style="left:507.8px;top:114.25px;font-size:6.5px;line-height:6.5px;color:#333;font-weight:normal;font-family:'Liberation Sans', sans-serif;transform:scaleX(0.7947);letter-spacing:0.000px;-webkit-text-stroke:0.05px currentColor;">CUR</span>
<span class="t" id="t49" style="left:528.3px;top:114.00px;font-size:7px;line-height:7px;color:#333;font-weight:normal;font-family:'Liberation Sans', sans-serif;transform:scaleX(1.0000);letter-spacing:0.014px;-webkit-text-stroke:0.05px currentColor;">MAX</span>
<span class="t" id="t50" style="left:379.3px;top:126.70px;font-size:10.2px;line-height:10.2px;color:#1c1c64;font-weight:bold;font-family:'Liberation Sans', sans-serif;transform:scaleX(1.0931);letter-spacing:0.000px;">0</span>
<span class="t" id="t51" style="left:379.3px;top:147.10px;font-size:10.2px;line-height:10.2px;color:#8e8e8e;font-weight:bold;font-family:'Liberation Sans', sans-serif;transform:scaleX(1.0931);letter-spacing:0.000px;">0</span>
<span class="t" id="t52" style="left:465.3px;top:126.70px;font-size:10.2px;line-height:10.2px;color:#1c1c64;font-weight:bold;font-family:'Liberation Sans', sans-serif;transform:scaleX(1.0922);letter-spacing:0.000px;">976771054</span>
<span class="t" id="t53" style="left:465.3px;top:147.10px;font-size:10.2px;line-height:10.2px;color:#5a1c1c;font-weight:bold;font-family:'Liberation Sans', sans-serif;transform:scaleX(1.0922);letter-spacing:0.000px;">976771054</span>
<span class="t" id="t54" style="left:332.8px;top:181.00px;font-size:9.8px;line-height:9.8px;color:#28288e;font-weight:bold;font-family:'Liberation Sans', sans-serif;transform:scaleX(0.9137);letter-spacing:0.000px;">Scan</span>
<span class="t" id="t55" style="left:334.1px;top:210.40px;font-size:8.4px;line-height:8.4px;color:#22225a;font-weight:bold;font-family:'Liberation Sans', sans-serif;transform:scaleX(0.9519);letter-spacing:0.000px;">QUICK</span>
<span class="t" id="t56" style="left:442.8px;top:165.75px;font-size:7.7px;line-height:7.7px;color:#222;font-weight:normal;font-family:'Liberation Sans', sans-serif;transform:scaleX(1.0000);letter-spacing:0.200px;-webkit-text-stroke:0.05px currentColor;">[ block size ]</span>
<span class="t" id="t57" style="left:442.8px;top:176.75px;font-size:7.7px;line-height:7.7px;color:#222;font-weight:normal;font-family:'Liberation Sans', sans-serif;transform:scaleX(1.0000);letter-spacing:0.526px;-webkit-text-stroke:0.05px currentColor;">[ auto ]</span>
<span class="t" id="t58" style="left:442.8px;top:191.75px;font-size:7.7px;line-height:7.7px;color:#222;font-weight:normal;font-family:'Liberation Sans', sans-serif;transform:scaleX(1.0000);letter-spacing:0.197px;-webkit-text-stroke:0.05px currentColor;">[ timeout,ms ]</span>
<span class="t" id="t59" style="left:495.4px;top:169.30px;font-size:10.1px;line-height:10.1px;color:#222;font-weight:normal;font-family:'Liberation Sans', sans-serif;transform:scaleX(0.9480);letter-spacing:0.000px;">2048</span>
<span class="t" id="t60" style="left:495.4px;top:188.30px;font-size:10.1px;line-height:10.1px;color:#222;font-weight:normal;font-family:'Liberation Sans', sans-serif;transform:scaleX(0.9438);letter-spacing:0.000px;">10000</span>
<span class="t" id="t61" style="left:445.7px;top:209.80px;font-size:9.6px;line-height:9.6px;color:#111;font-weight:bold;font-family:'Liberation Sans', sans-serif;transform:scaleX(1.0000);letter-spacing:0.572px;">End of test</span>
<span class="t" id="t62" style="left:328px;top:246.00px;font-size:9.6px;line-height:9.6px;color:#3f8e8e;font-weight:normal;font-family:'Liberation Sans', sans-serif;transform:scaleX(0.9558);letter-spacing:0.000px;">25</span>
<span class="t" id="t63" style="left:351.8px;top:246.00px;font-size:9.6px;line-height:9.6px;color:#222;font-weight:normal;font-family:'Liberation Sans', sans-serif;transform:scaleX(1.0000);letter-spacing:0.077px;-webkit-text-stroke:0.2px currentColor;">476873</span>
<span class="t" id="t64" style="left:322.3px;top:270.44px;font-size:9.6px;line-height:9.6px;color:#3f8e8e;font-weight:normal;font-family:'Liberation Sans', sans-serif;transform:scaleX(0.9928);letter-spacing:0.000px;">100</span>
<span class="t" id="t65" style="left:351.8px;top:270.44px;font-size:9.6px;line-height:9.6px;color:#222;font-weight:normal;font-family:'Liberation Sans', sans-serif;transform:scaleX(0.9558);letter-spacing:0.000px;-webkit-text-stroke:0.2px currentColor;">65</span>
<span class="t" id="t66" style="left:322.3px;top:294.88px;font-size:9.6px;line-height:9.6px;color:#3f8e8e;font-weight:normal;font-family:'Liberation Sans', sans-serif;transform:scaleX(0.9928);letter-spacing:0.000px;">250</span>
<span class="t" id="t67" style="left:351.8px;top:294.88px;font-size:9.6px;line-height:9.6px;color:#222;font-weight:normal;font-family:'Liberation Sans', sans-serif;transform:scaleX(0.7860);letter-spacing:0.000px;-webkit-text-stroke:0.2px currentColor;">1</span>
<span class="t" id="t68" style="left:320px;top:319.32px;font-size:9.6px;line-height:9.6px;color:#3f8e8e;font-weight:normal;font-family:'Liberation Sans', sans-serif;transform:scaleX(1.0000);letter-spacing:0.020px;">1,0s</span>
<span class="t" id="t69" style="left:351.8px;top:319.32px;font-size:9.6px;line-height:9.6px;color:#222;font-weight:normal;font-family:'Liberation Sans', sans-serif;transform:scaleX(0.7860);letter-spacing:0.000px;-webkit-text-stroke:0.2px currentColor;">1</span>
<span class="t" id="t70" style="left:320px;top:343.76px;font-size:9.6px;line-height:9.6px;color:#3f8e8e;font-weight:normal;font-family:'Liberation Sans', sans-serif;transform:scaleX(1.0000);letter-spacing:0.020px;">3,0s</span>
<span class="t" id="t71" style="left:351.8px;top:343.76px;font-size:9.6px;line-height:9.6px;color:#333;font-weight:normal;font-family:'Liberation Sans', sans-serif;transform:scaleX(0.9731);letter-spacing:0.000px;-webkit-text-stroke:0.2px currentColor;">0</span>
<span class="t" id="t72" style="left:325.7px;top:368.20px;font-size:9.6px;line-height:9.6px;color:#507070;font-weight:normal;font-family:'Liberation Sans', sans-serif;transform:scaleX(1.1231);letter-spacing:0.000px;">&gt;</span>
<span class="t" id="t73" style="left:351.8px;top:368.20px;font-size:9.6px;line-height:9.6px;color:#333;font-weight:normal;font-family:'Liberation Sans', sans-serif;transform:scaleX(0.9731);letter-spacing:0.000px;-webkit-text-stroke:0.2px currentColor;">0</span>
<span class="t" id="t74" style="left:324px;top:390.84px;font-size:9.6px;line-height:9.6px;color:#3f8e8e;font-weight:normal;font-family:'Liberation Sans', sans-serif;transform:scaleX(1.0000);letter-spacing:0.102px;">Err</span>
<span class="t" id="t75" style="left:351.8px;top:390.84px;font-size:9.6px;line-height:9.6px;color:#e05a5a;font-weight:normal;font-family:'Liberation Sans', sans-serif;transform:scaleX(0.9731);letter-spacing:0.000px;-webkit-text-stroke:0.2px currentColor;">0</span>
<span class="t" id="t76" style="left:420.8px;top:240.30px;font-size:9.8px;line-height:9.8px;color:#52cae4;font-weight:bold;font-family:'Liberation Sans', sans-serif;transform:scaleX(1.0000);letter-spacing:0.326px;">500,10 GB</span>
<span class="t" id="t77" style="left:499.3px;top:239.60px;font-size:12.4px;line-height:12.4px;color:#ececec;font-weight:normal;font-family:'Liberation Sans', sans-serif;transform:scaleX(0.8798);letter-spacing:0.000px;">100</span>
<span class="t" id="t78" style="left:530.2px;top:239.60px;font-size:12.4px;line-height:12.4px;color:#ececec;font-weight:normal;font-family:'Liberation Sans', sans-serif;transform:scaleX(0.9881);letter-spacing:0.000px;">%</span>
<span class="t" id="t79" style="left:420.8px;top:264.00px;font-size:9.8px;line-height:9.8px;color:#48b048;font-weight:bold;font-family:'Liberation Sans', sans-serif;transform:scaleX(1.0000);letter-spacing:0.861px;">65 MB/s</span>
<span class="t" id="t80" style="left:503.3px;top:264.45px;font-size:9.9px;line-height:9.9px;color:#1e1e1e;font-weight:normal;font-family:'Liberation Sans', sans-serif;transform:scaleX(1.0000);letter-spacing:0.101px;-webkit-text-stroke:0.2px currentColor;">verify</span>
<span class="t" id="t81" style="left:503.3px;top:282.25px;font-size:9.9px;line-height:9.9px;color:#1e1e1e;font-weight:normal;font-family:'Liberation Sans', sans-serif;transform:scaleX(0.9714);letter-spacing:0.000px;-webkit-text-stroke:0.2px currentColor;">read</span>
<span class="t" id="t82" style="left:503.3px;top:299.75px;font-size:9.9px;line-height:9.9px;color:#1e1e1e;font-weight:normal;font-family:'Liberation Sans', sans-serif;transform:scaleX(0.9924);letter-spacing:0.000px;-webkit-text-stroke:0.2px currentColor;">write</span>
<span class="t" id="t83" style="left:432.6px;top:286.55px;font-size:9.9px;line-height:9.9px;color:#8e8e8e;font-weight:normal;font-family:'Liberation Sans', sans-serif;transform:scaleX(0.9605);letter-spacing:0.000px;">DDD (API)</span>
<span class="t" id="t84" style="left:436.4px;top:351.65px;font-size:9.9px;line-height:9.9px;color:#1e1e1e;font-weight:normal;font-family:'Liberation Sans', sans-serif;transform:scaleX(0.9887);letter-spacing:0.000px;-webkit-text-stroke:0.2px currentColor;">Ignore</span>
<span class="t" id="t85" style="left:487.3px;top:351.65px;font-size:9.9px;line-height:9.9px;color:#1e1e1e;font-weight:normal;font-family:'Liberation Sans', sans-serif;transform:scaleX(0.9342);letter-spacing:0.000px;-webkit-text-stroke:0.2px currentColor;">Erase</span>
<span class="t" id="t86" style="left:436.4px;top:368.65px;font-size:9.9px;line-height:9.9px;color:#1e1e1e;font-weight:normal;font-family:'Liberation Sans', sans-serif;transform:scaleX(0.9547);letter-spacing:0.000px;-webkit-text-stroke:0.2px currentColor;">Remap</span>
<span class="t" id="t87" style="left:487.3px;top:368.65px;font-size:9.9px;line-height:9.9px;color:#1e1e1e;font-weight:normal;font-family:'Liberation Sans', sans-serif;transform:scaleX(0.9833);letter-spacing:0.000px;-webkit-text-stroke:0.2px currentColor;">Refresh</span>
<span class="t" id="t88" style="left:433.8px;top:395.95px;font-size:9.7px;line-height:9.7px;color:#1a1a80;font-weight:bold;font-family:'Liberation Sans', sans-serif;transform:scaleX(0.9387);letter-spacing:0.000px;">Grid</span>
<span class="t" id="t89" style="left:574.5px;top:114.10px;font-size:8.8px;line-height:8.8px;color:#7a7a7a;font-weight:normal;font-family:'Liberation Sans', sans-serif;transform:scaleX(1.0000);letter-spacing:0.256px;-webkit-text-stroke:0.2px currentColor;">API</span>
<span class="t" id="t90" style="left:574.5px;top:131.20px;font-size:8.8px;line-height:8.8px;color:#7a7a7a;font-weight:normal;font-family:'Liberation Sans', sans-serif;transform:scaleX(1.0000);letter-spacing:0.172px;-webkit-text-stroke:0.2px currentColor;">PIO</span>
<span class="t" id="t91" style="left:567.1px;top:181.30px;font-size:9.4px;line-height:9.4px;color:#1e1e1e;font-weight:normal;font-family:'Liberation Sans', sans-serif;transform:scaleX(1.0000);letter-spacing:0.304px;-webkit-text-stroke:0.2px currentColor;">Sleep</span>
<span class="t" id="t92" style="left:566.3px;top:229.80px;font-size:9.6px;line-height:9.6px;color:#1e1e1e;font-weight:normal;font-family:'Liberation Sans', sans-serif;transform:scaleX(1.0000);letter-spacing:0.006px;-webkit-text-stroke:0.2px currentColor;">Recall</span>
<span class="t" id="t93" style="left:559.5px;top:319.00px;font-size:7.6px;line-height:7.6px;color:#bcbcbc;font-weight:bold;font-family:'Liberation Sans', sans-serif;transform:scaleX(1.1852);letter-spacing:0.000px;">WR</span>
<span class="t" id="t94" style="left:585.5px;top:319.00px;font-size:7.6px;line-height:7.6px;color:#bcbcbc;font-weight:bold;font-family:'Liberation Sans', sans-serif;transform:scaleX(1.3219);letter-spacing:0.000px;">RD</span>
<span class="t" id="t95" style="left:566.5px;top:376.00px;font-size:9.6px;line-height:9.6px;color:#1e1e1e;font-weight:normal;font-family:'Liberation Sans', sans-serif;transform:scaleX(0.9936);letter-spacing:0.000px;-webkit-text-stroke:0.2px currentColor;">Passp</span>
<span class="t" id="t96" style="left:14.6px;top:417.95px;font-size:9.9px;line-height:9.9px;color:#1e1e1e;font-weight:normal;font-family:'Liberation Sans', sans-serif;transform:scaleX(1.0000);letter-spacing:0.307px;-webkit-text-stroke:0.2px currentColor;">17:25:39</span>
<span class="t" id="t97" style="left:68.2px;top:417.95px;font-size:9.9px;line-height:9.9px;color:#1e1e1e;font-weight:normal;font-family:'Liberation Sans', sans-serif;transform:scaleX(1.0000);letter-spacing:0.080px;-webkit-text-stroke:0.2px currentColor;">Recallibration... OK</span>
<span class="t" id="t98" style="left:14.6px;top:433.77px;font-size:9.9px;line-height:9.9px;color:#1e1e1e;font-weight:normal;font-family:'Liberation Sans', sans-serif;transform:scaleX(1.0000);letter-spacing:0.307px;-webkit-text-stroke:0.2px currentColor;">17:25:39</span>
<span class="t" id="t99" style="left:68.2px;top:433.77px;font-size:9.9px;line-height:9.9px;color:#1e1e1e;font-weight:normal;font-family:'Liberation Sans', sans-serif;transform:scaleX(1.0000);letter-spacing:0.067px;-webkit-text-stroke:0.2px currentColor;">Starting Reading, LBA=0..976771054, FULL, sequential access w. REMAP, tio 10000ms</span>
<span class="t" id="t100" style="left:14.6px;top:449.59px;font-size:9.9px;line-height:9.9px;color:#1e1e1e;font-weight:normal;font-family:'Liberation Sans', sans-serif;transform:scaleX(1.0000);letter-spacing:0.307px;-webkit-text-stroke:0.2px currentColor;">17:47:40</span>
<span class="t" id="t101" style="left:68.2px;top:449.59px;font-size:9.9px;line-height:9.9px;color:#1e1e1e;font-weight:normal;font-family:'Liberation Sans', sans-serif;transform:scaleX(1.0000);letter-spacing:0.096px;-webkit-text-stroke:0.2px currentColor;">Get S.M.A.R.T. command... OK</span>
<span class="t" id="t102" style="left:14.6px;top:465.41px;font-size:9.9px;line-height:9.9px;color:#1e1e1e;font-weight:normal;font-family:'Liberation Sans', sans-serif;transform:scaleX(1.0000);letter-spacing:0.307px;-webkit-text-stroke:0.2px currentColor;">17:47:40</span>
<span class="t" id="t103" style="left:68.2px;top:465.41px;font-size:9.9px;line-height:9.9px;color:#1e1e1e;font-weight:normal;font-family:'Liberation Sans', sans-serif;transform:scaleX(0.9925);letter-spacing:0.000px;-webkit-text-stroke:0.2px currentColor;">SMART base updated.</span>
<span class="t" id="t104" style="left:14.6px;top:481.23px;font-size:9.9px;line-height:9.9px;color:#1e1e1e;font-weight:normal;font-family:'Liberation Sans', sans-serif;transform:scaleX(1.0000);letter-spacing:0.307px;-webkit-text-stroke:0.2px currentColor;">17:47:40</span>
<span class="t" id="t105" style="left:68.2px;top:481.23px;font-size:9.9px;line-height:9.9px;color:#1e1e1e;font-weight:normal;font-family:'Liberation Sans', sans-serif;transform:scaleX(0.9863);letter-spacing:0.000px;-webkit-text-stroke:0.2px currentColor;">SMART status = GOOD</span>
<span class="t" id="t106" style="left:14.6px;top:497.05px;font-size:9.9px;line-height:9.9px;color:#1e1e1e;font-weight:normal;font-family:'Liberation Sans', sans-serif;transform:scaleX(1.0000);letter-spacing:0.307px;-webkit-text-stroke:0.2px currentColor;">18:43:46</span>
<span class="t" id="t107" style="left:68.2px;top:497.05px;font-size:9.9px;line-height:9.9px;color:#1e1e1e;font-weight:normal;font-family:'Liberation Sans', sans-serif;transform:scaleX(1.0000);letter-spacing:0.237px;-webkit-text-stroke:0.2px currentColor;">*** Scan results: no warnings, no errors. Last block at 976771054 (500 GB), time 1 hours 18 minu...</span>
<span class="t" id="t108" style="left:14.6px;top:512.87px;font-size:9.9px;line-height:9.9px;color:#1e1e1e;font-weight:normal;font-family:'Liberation Sans', sans-serif;transform:scaleX(1.0000);letter-spacing:0.307px;-webkit-text-stroke:0.2px currentColor;">18:43:46</span>
<span class="t" id="t109" style="left:68.2px;top:512.87px;font-size:9.9px;line-height:9.9px;color:#2a2a9e;font-weight:normal;font-family:'Liberation Sans', sans-serif;transform:scaleX(1.0000);letter-spacing:0.146px;-webkit-text-stroke:0.2px currentColor;">Speed: Maximum 138 MB/s. Average 101 MB/s. Minimum 64 MB/s. 389 points.</span>
<span class="t" id="t110" style="left:572.2px;top:421.75px;font-size:9.3px;line-height:9.3px;color:#1e1e1e;font-weight:normal;font-family:'Liberation Sans', sans-serif;transform:scaleX(1.0000);letter-spacing:0.227px;-webkit-text-stroke:0.2px currentColor;">Sound</span>
<span class="t" id="t111" style="left:572.2px;top:439.75px;font-size:9.3px;line-height:9.3px;color:#1e1e1e;font-weight:normal;font-family:'Liberation Sans', sans-serif;transform:scaleX(0.9817);letter-spacing:0.000px;-webkit-text-stroke:0.2px currentColor;">Hints</span>
</body></html>
